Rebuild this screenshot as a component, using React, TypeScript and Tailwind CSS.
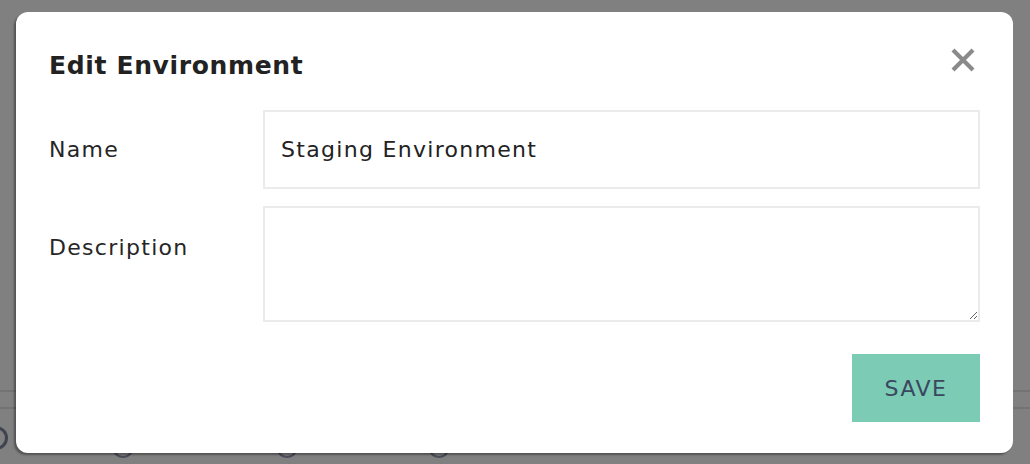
import React from "react";

const font = "font-['DejaVu_Sans',sans-serif]";

function Backdrop() {
  return (
    <>
      <div className="absolute left-0 right-0 top-[390px] h-[2px] bg-[#737373]" />
      <div className="absolute left-0 right-0 top-[407px] h-[2px] bg-[#737373]" />
      <div className="absolute left-[-16px] top-[426px] size-[24px] rounded-full border-[3px] border-[#3f4450]" />
      <div className="absolute left-[112px] top-[436px] size-[22px] rounded-full border-[2px] border-[#4a4f5a]" />
      <div className="absolute left-[276px] top-[436px] size-[22px] rounded-full border-[2px] border-[#4a4f5a]" />
      <div className="absolute left-[428px] top-[436px] size-[22px] rounded-full border-[2px] border-[#4a4f5a]" />
    </>
  );
}

function CloseIcon() {
  return (
    <svg width="24" height="24" viewBox="0 0 24 24" aria-hidden>
      <path d="M2 2 L22 22 M22 2 L2 22" stroke="#8a8a8a" strokeWidth="4.2" strokeLinecap="butt" />
    </svg>
  );
}

function Field({ label, children, top }: { label: string; children: React.ReactNode; top: string }) {
  return (
    <div className="flex">
      <label className={`w-[214px] shrink-0 text-[22px] tracking-[1.3px] text-[#262626] leading-[28px] ${top}`}>{label}</label>
      <div className="flex-1">{children}</div>
    </div>
  );
}

export default function App() {
  return (
    <div className={`relative w-[1030px] h-[464px] overflow-hidden bg-[#808080] ${font}`}>
      <Backdrop />
      <div className="absolute left-[16px] top-[12px] w-[997px] h-[441px] rounded-[12px] bg-white shadow-[-2px_2px_2px_rgba(0,0,0,0.35)] pl-[33px] pr-[33px] pt-[38px]">
        <div className="flex items-start justify-between">
          <h2 className="text-[25px] font-bold text-[#222] leading-[32px] tracking-[0.65px]">Edit Environment</h2>
          <button className="mt-[-2px] mr-[5px]" aria-label="Close">
            <CloseIcon />
          </button>
        </div>
        <div className="mt-[28px] flex flex-col gap-[17px]">
          <Field label="Name" top="pt-[26px]">
            <input
              readOnly
              value="Staging Environment"
              className="w-full h-[79px] border-[2px] border-[#ebebeb] px-[16px] text-[22px] tracking-[1.3px] text-[#222] outline-none"
            />
          </Field>
          <Field label="Description" top="pt-[28px]">
            <textarea className="block w-full h-[116px] border-[2px] border-[#ebebeb] px-[16px] py-[24px] text-[22px] tracking-[1.3px] text-[#222] outline-none" />
          </Field>
        </div>
        <div className="mt-[32px] flex justify-end">
          <button className="w-[128px] h-[68px] bg-[#7ccbb5] text-[22px] tracking-[1.5px] text-[#3a4760]">SAVE</button>
        </div>
      </div>
    </div>
  );
}
